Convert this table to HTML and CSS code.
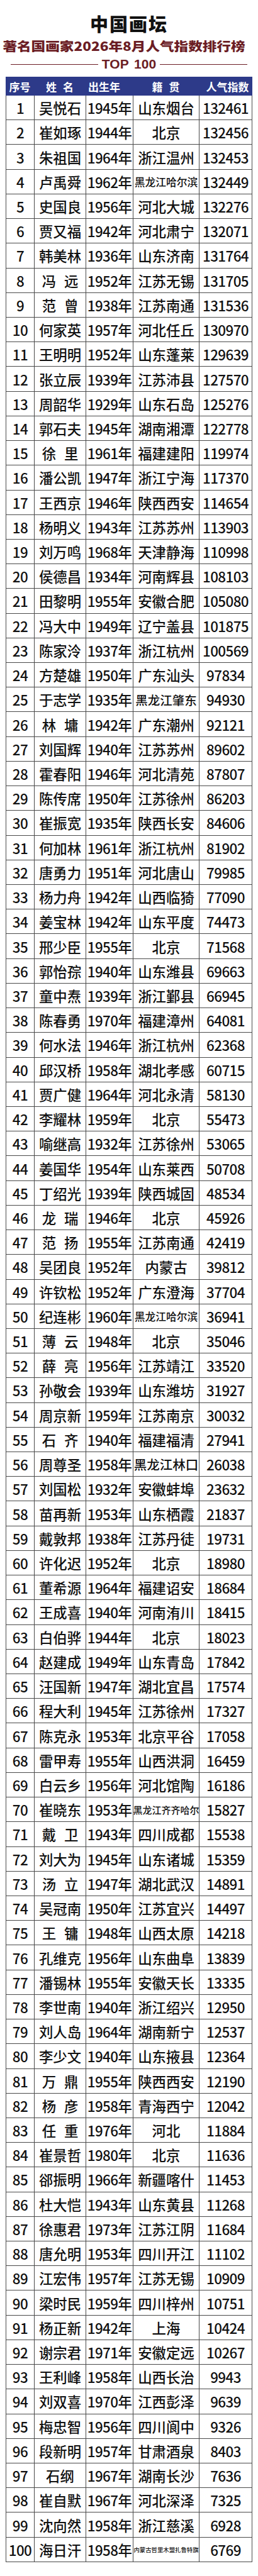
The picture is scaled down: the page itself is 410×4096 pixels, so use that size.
FILE: index.html
```html
<!DOCTYPE html>
<html lang="zh-CN">
<head>
<meta charset="utf-8">
<title>中国画坛 著名国画家2026年8月人气指数排行榜</title>
<link rel="stylesheet" href="styles.css">
</head>
<body>
<header class="head">
  <h1 class="title">中国画坛</h1>
  <h2 class="subtitle">著名国画家2026年8月人气指数排行榜</h2>
  <div class="top"><span class="rule"></span><span class="top-text">TOP 100</span><span class="rule"></span></div>
</header>
<section class="board">
  <div class="thead">
    <span>序号</span><span class="sp">姓 名</span><span class="th-year">出生年</span><span class="sp">籍 贯</span><span class="th-idx">人气指数</span>
  </div>
  <div class="tbody">
<div class="r"><span>1</span><span>吴悦石</span><span>1945年</span><span>山东烟台</span><span>132461</span></div>
<div class="r"><span>2</span><span>崔如琢</span><span>1944年</span><span>北京</span><span>132456</span></div>
<div class="r"><span>3</span><span>朱祖国</span><span>1964年</span><span>浙江温州</span><span>132453</span></div>
<div class="r"><span>4</span><span>卢禹舜</span><span>1962年</span><span class="o6">黑龙江哈尔滨</span><span>132449</span></div>
<div class="r"><span>5</span><span>史国良</span><span>1956年</span><span>河北大城</span><span>132276</span></div>
<div class="r"><span>6</span><span>贾又福</span><span>1942年</span><span>河北肃宁</span><span>132071</span></div>
<div class="r"><span>7</span><span>韩美林</span><span>1936年</span><span>山东济南</span><span>131764</span></div>
<div class="r"><span>8</span><span class="sp">冯 远</span><span>1952年</span><span>江苏无锡</span><span>131705</span></div>
<div class="r"><span>9</span><span class="sp">范 曾</span><span>1938年</span><span>江苏南通</span><span>131536</span></div>
<div class="r"><span>10</span><span>何家英</span><span>1957年</span><span>河北任丘</span><span>130970</span></div>
<div class="r"><span>11</span><span>王明明</span><span>1952年</span><span>山东蓬莱</span><span>129639</span></div>
<div class="r"><span>12</span><span>张立辰</span><span>1939年</span><span>江苏沛县</span><span>127570</span></div>
<div class="r"><span>13</span><span>周韶华</span><span>1929年</span><span>山东石岛</span><span>125276</span></div>
<div class="r"><span>14</span><span>郭石夫</span><span>1945年</span><span>湖南湘潭</span><span>122778</span></div>
<div class="r"><span>15</span><span class="sp">徐 里</span><span>1961年</span><span>福建建阳</span><span>119974</span></div>
<div class="r"><span>16</span><span>潘公凯</span><span>1947年</span><span>浙江宁海</span><span>117370</span></div>
<div class="r"><span>17</span><span>王西京</span><span>1946年</span><span>陕西西安</span><span>114654</span></div>
<div class="r"><span>18</span><span>杨明义</span><span>1943年</span><span>江苏苏州</span><span>113903</span></div>
<div class="r"><span>19</span><span>刘万鸣</span><span>1968年</span><span>天津静海</span><span>110998</span></div>
<div class="r"><span>20</span><span>侯德昌</span><span>1934年</span><span>河南辉县</span><span>108103</span></div>
<div class="r"><span>21</span><span>田黎明</span><span>1955年</span><span>安徽合肥</span><span>105080</span></div>
<div class="r"><span>22</span><span>冯大中</span><span>1949年</span><span>辽宁盖县</span><span>101875</span></div>
<div class="r"><span>23</span><span>陈家泠</span><span>1937年</span><span>浙江杭州</span><span>100569</span></div>
<div class="r"><span>24</span><span>方楚雄</span><span>1950年</span><span>广东汕头</span><span>97834</span></div>
<div class="r"><span>25</span><span>于志学</span><span>1935年</span><span class="o5">黑龙江肇东</span><span>94930</span></div>
<div class="r"><span>26</span><span class="sp">林 墉</span><span>1942年</span><span>广东潮州</span><span>92121</span></div>
<div class="r"><span>27</span><span>刘国辉</span><span>1940年</span><span>江苏苏州</span><span>89602</span></div>
<div class="r"><span>28</span><span>霍春阳</span><span>1946年</span><span>河北清苑</span><span>87807</span></div>
<div class="r"><span>29</span><span>陈传席</span><span>1950年</span><span>江苏徐州</span><span>86203</span></div>
<div class="r"><span>30</span><span>崔振宽</span><span>1935年</span><span>陕西长安</span><span>84606</span></div>
<div class="r"><span>31</span><span>何加林</span><span>1961年</span><span>浙江杭州</span><span>81902</span></div>
<div class="r"><span>32</span><span>唐勇力</span><span>1951年</span><span>河北唐山</span><span>79985</span></div>
<div class="r"><span>33</span><span>杨力舟</span><span>1942年</span><span>山西临猗</span><span>77090</span></div>
<div class="r"><span>34</span><span>姜宝林</span><span>1942年</span><span>山东平度</span><span>74473</span></div>
<div class="r"><span>35</span><span>邢少臣</span><span>1955年</span><span>北京</span><span>71568</span></div>
<div class="r"><span>36</span><span>郭怡孮</span><span>1940年</span><span>山东潍县</span><span>69663</span></div>
<div class="r"><span>37</span><span>童中焘</span><span>1939年</span><span>浙江鄞县</span><span>66945</span></div>
<div class="r"><span>38</span><span>陈春勇</span><span>1970年</span><span>福建漳州</span><span>64081</span></div>
<div class="r"><span>39</span><span>何水法</span><span>1946年</span><span>浙江杭州</span><span>62368</span></div>
<div class="r"><span>40</span><span>邱汉桥</span><span>1958年</span><span>湖北孝感</span><span>60715</span></div>
<div class="r"><span>41</span><span>贾广健</span><span>1964年</span><span>河北永清</span><span>58130</span></div>
<div class="r"><span>42</span><span>李耀林</span><span>1959年</span><span>北京</span><span>55473</span></div>
<div class="r"><span>43</span><span>喻继高</span><span>1932年</span><span>江苏徐州</span><span>53065</span></div>
<div class="r"><span>44</span><span>姜国华</span><span>1954年</span><span>山东莱西</span><span>50708</span></div>
<div class="r"><span>45</span><span>丁绍光</span><span>1939年</span><span>陕西城固</span><span>48534</span></div>
<div class="r"><span>46</span><span class="sp">龙 瑞</span><span>1946年</span><span>北京</span><span>45926</span></div>
<div class="r"><span>47</span><span class="sp">范 扬</span><span>1955年</span><span>江苏南通</span><span>42419</span></div>
<div class="r"><span>48</span><span>吴团良</span><span>1952年</span><span>内蒙古</span><span>39812</span></div>
<div class="r"><span>49</span><span>许钦松</span><span>1952年</span><span>广东澄海</span><span>37704</span></div>
<div class="r"><span>50</span><span>纪连彬</span><span>1960年</span><span class="o6">黑龙江哈尔滨</span><span>36941</span></div>
<div class="r"><span>51</span><span class="sp">薄 云</span><span>1948年</span><span>北京</span><span>35046</span></div>
<div class="r"><span>52</span><span class="sp">薛 亮</span><span>1956年</span><span>江苏靖江</span><span>33520</span></div>
<div class="r"><span>53</span><span>孙敬会</span><span>1939年</span><span>山东潍坊</span><span>31927</span></div>
<div class="r"><span>54</span><span>周京新</span><span>1959年</span><span>江苏南京</span><span>30032</span></div>
<div class="r"><span>55</span><span class="sp">石 齐</span><span>1940年</span><span>福建福清</span><span>27941</span></div>
<div class="r"><span>56</span><span>周尊圣</span><span>1958年</span><span class="o5b">黑龙江林口</span><span>26038</span></div>
<div class="r"><span>57</span><span>刘国松</span><span>1932年</span><span>安徽蚌埠</span><span>23632</span></div>
<div class="r"><span>58</span><span>苗再新</span><span>1953年</span><span>山东栖霞</span><span>21837</span></div>
<div class="r"><span>59</span><span>戴敦邦</span><span>1938年</span><span>江苏丹徒</span><span>19731</span></div>
<div class="r"><span>60</span><span>许化迟</span><span>1952年</span><span>北京</span><span>18980</span></div>
<div class="r"><span>61</span><span>董希源</span><span>1964年</span><span>福建诏安</span><span>18684</span></div>
<div class="r"><span>62</span><span>王成喜</span><span>1940年</span><span>河南洧川</span><span>18415</span></div>
<div class="r"><span>63</span><span>白伯骅</span><span>1944年</span><span>北京</span><span>18023</span></div>
<div class="r"><span>64</span><span>赵建成</span><span>1949年</span><span>山东青岛</span><span>17842</span></div>
<div class="r"><span>65</span><span>汪国新</span><span>1947年</span><span>湖北宜昌</span><span>17574</span></div>
<div class="r"><span>66</span><span>程大利</span><span>1945年</span><span>江苏徐州</span><span>17327</span></div>
<div class="r"><span>67</span><span>陈克永</span><span>1953年</span><span>北京平谷</span><span>17058</span></div>
<div class="r"><span>68</span><span>雷甲寿</span><span>1955年</span><span>山西洪洞</span><span>16459</span></div>
<div class="r"><span>69</span><span>白云乡</span><span>1956年</span><span>河北馆陶</span><span>16186</span></div>
<div class="r"><span>70</span><span>崔晓东</span><span>1953年</span><span class="o7">黑龙江齐齐哈尔</span><span>15827</span></div>
<div class="r"><span>71</span><span class="sp">戴 卫</span><span>1943年</span><span>四川成都</span><span>15538</span></div>
<div class="r"><span>72</span><span>刘大为</span><span>1945年</span><span>山东诸城</span><span>15359</span></div>
<div class="r"><span>73</span><span class="sp">汤 立</span><span>1947年</span><span>湖北武汉</span><span>14891</span></div>
<div class="r"><span>74</span><span>吴冠南</span><span>1950年</span><span>江苏宜兴</span><span>14497</span></div>
<div class="r"><span>75</span><span class="sp">王 镛</span><span>1948年</span><span>山西太原</span><span>14218</span></div>
<div class="r"><span>76</span><span>孔维克</span><span>1956年</span><span>山东曲阜</span><span>13839</span></div>
<div class="r"><span>77</span><span>潘锡林</span><span>1955年</span><span>安徽天长</span><span>13335</span></div>
<div class="r"><span>78</span><span>李世南</span><span>1940年</span><span>浙江绍兴</span><span>12950</span></div>
<div class="r"><span>79</span><span>刘人岛</span><span>1964年</span><span>湖南新宁</span><span>12537</span></div>
<div class="r"><span>80</span><span>李少文</span><span>1940年</span><span>山东掖县</span><span>12364</span></div>
<div class="r"><span>81</span><span class="sp">万 鼎</span><span>1955年</span><span>陕西西安</span><span>12190</span></div>
<div class="r"><span>82</span><span class="sp">杨 彦</span><span>1958年</span><span>青海西宁</span><span>12042</span></div>
<div class="r"><span>83</span><span class="sp">任 重</span><span>1976年</span><span>河北</span><span>11884</span></div>
<div class="r"><span>84</span><span>崔景哲</span><span>1980年</span><span>北京</span><span>11636</span></div>
<div class="r"><span>85</span><span>郤振明</span><span>1966年</span><span>新疆喀什</span><span>11453</span></div>
<div class="r"><span>86</span><span>杜大恺</span><span>1943年</span><span>山东黄县</span><span>11268</span></div>
<div class="r"><span>87</span><span>徐惠君</span><span>1973年</span><span>江苏江阴</span><span>11684</span></div>
<div class="r"><span>88</span><span>唐允明</span><span>1953年</span><span>四川开江</span><span>11102</span></div>
<div class="r"><span>89</span><span>江宏伟</span><span>1957年</span><span>江苏无锡</span><span>10909</span></div>
<div class="r"><span>90</span><span>梁时民</span><span>1959年</span><span>四川梓州</span><span>10751</span></div>
<div class="r"><span>91</span><span>杨正新</span><span>1942年</span><span>上海</span><span>10424</span></div>
<div class="r"><span>92</span><span>谢宗君</span><span>1971年</span><span>安徽定远</span><span>10267</span></div>
<div class="r"><span>93</span><span>王利峰</span><span>1958年</span><span>山西长治</span><span>9943</span></div>
<div class="r"><span>94</span><span>刘双喜</span><span>1970年</span><span>江西彭泽</span><span>9639</span></div>
<div class="r"><span>95</span><span>梅忠智</span><span>1956年</span><span>四川阆中</span><span>9326</span></div>
<div class="r"><span>96</span><span>段新明</span><span>1957年</span><span>甘肃酒泉</span><span>8403</span></div>
<div class="r"><span>97</span><span>石纲</span><span>1967年</span><span>湖南长沙</span><span>7636</span></div>
<div class="r"><span>98</span><span>崔自默</span><span>1967年</span><span>河北深泽</span><span>7325</span></div>
<div class="r"><span>99</span><span>沈向然</span><span>1958年</span><span>浙江慈溪</span><span>6928</span></div>
<div class="r"><span>100</span><span>海日汗</span><span>1958年</span><span class="o10">内蒙古哲里木盟扎鲁特旗</span><span>6769</span></div>
  </div>
</section>
</body>
</html>
```
FILE: styles.css
```css
html, body {
  margin: 0;
  padding: 0;
  background: #ffffff;
}

body {
  width: 410px;
  font-family: "Noto Sans CJK SC", "Noto Sans", sans-serif;
  color: #111111;
}

.head {
  height: 122px;
  box-sizing: border-box;
  padding-top: 22px;
}

.title {
  margin: 0;
  height: 30px;
  line-height: 30px;
  font-size: 29px;
  font-weight: 900;
  letter-spacing: 2px;
  text-align: center;
  color: #111111;
}

.subtitle {
  margin: 9px 0 0;
  height: 24px;
  line-height: 24px;
  font-size: 22.6px;
  font-weight: 900;
  text-align: center;
  padding-right: 16px;
  color: #6b1d24;
  white-space: nowrap;
  transform: scaleY(0.88);
}

.top {
  margin-top: 6px;
  height: 22px;
  display: flex;
  align-items: center;
  padding: 0 17px;
  gap: 6px;
}

.rule {
  flex: 1;
  height: 1px;
  background: #6b1d24;
}

.top-text {
  font-family: "Liberation Sans", Arial, sans-serif;
  font-weight: 700;
  font-size: 21px;
  line-height: 22px;
  color: #6b1d24;
  word-spacing: 3px;
}

.board {
  margin-left: 9px;
  width: 392px;
}

.thead {
  display: grid;
  grid-template-columns: 45px 82px 75px 105px 85px;
  height: 30px;
  background: #2d3a89;
  color: #ffffff;
  font-weight: 700;
  font-size: 17px;
}

.thead span {
  display: flex;
  align-items: center;
  justify-content: center;
  white-space: nowrap;
}

.th-year { padding-right: 16px; }
.th-idx { padding-left: 6px; }

.tbody {
  display: flex;
  flex-direction: column;
  gap: 1px;
  background: #4a4a4a;
  padding: 0 1px 1px;
}

.r {
  display: grid;
  grid-template-columns: 44px 81px 74px 104px 83px;
  column-gap: 1px;
  height: 38.234px;
  font-size: 22.4px;
  font-weight: 500;
}

.r span {
  display: flex;
  align-items: center;
  justify-content: center;
  background: #ffffff;
  white-space: nowrap;
  overflow: hidden;
  letter-spacing: -0.6px;
}

.r span:nth-child(2),
.r span:nth-child(4) {
  letter-spacing: 0;
}

.sp { word-spacing: 0.35em; }

.r .o5 { font-size: 19.5px; }
.r .o5b { font-size: 20.5px; }
.r .o6 { font-size: 16.8px; }
.r .o7 { font-size: 15px; }
.r .o10 { font-size: 9.4px; }
```
